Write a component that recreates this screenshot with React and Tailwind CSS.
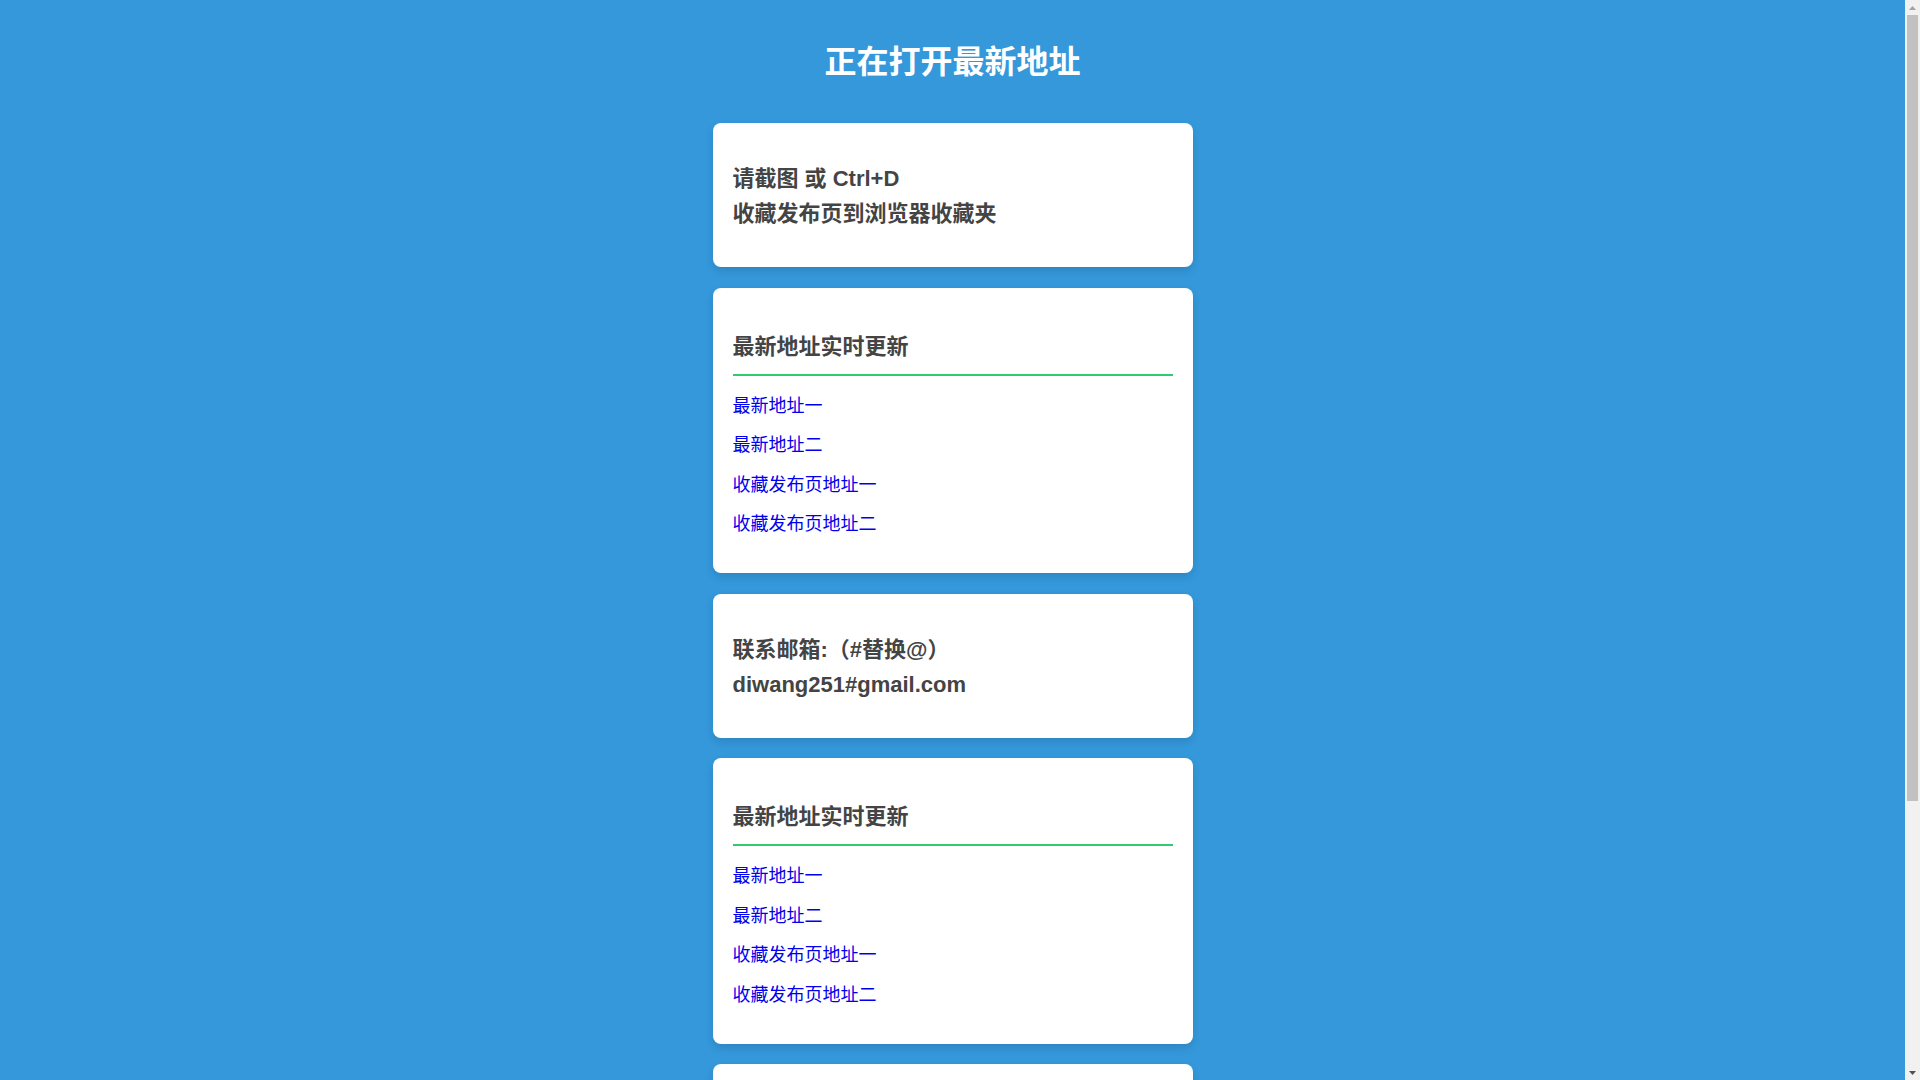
import React from "react";

const font = { fontFamily: '"Liberation Sans", Arial, "Noto Sans CJK SC", sans-serif' };

function CardA() {
  return (
    <div className="bg-white rounded-lg shadow-[0_4px_8px_rgba(0,0,0,0.12)] px-5 pt-[38px] pb-[36px]">
      <p className="text-[22px] leading-[35px] font-bold text-[#444]">请截图 或 Ctrl+D</p>
      <p className="text-[22px] leading-[35px] font-bold text-[#444]">收藏发布页到浏览器收藏夹</p>
    </div>
  );
}

function CardB() {
  const links = ["最新地址一", "最新地址二", "收藏发布页地址一", "收藏发布页地址二"];
  return (
    <div className="bg-white rounded-lg shadow-[0_4px_8px_rgba(0,0,0,0.12)] px-5 pt-[41px] pb-[29px]">
      <h2 className="text-[22px] leading-[35px] font-bold text-[#444] pb-[10px] border-b-2 border-[#2ecc71]">
        最新地址实时更新
      </h2>
      <ul className="mt-[11px]">
        {links.map((l) => (
          <li key={l} className="py-[5.3px] text-[18px] leading-[28.8px]">
            <a href="#" className="text-[#0000ee] no-underline">{l}</a>
          </li>
        ))}
      </ul>
    </div>
  );
}

function CardC() {
  return (
    <div className="bg-white rounded-lg shadow-[0_4px_8px_rgba(0,0,0,0.12)] px-5 pt-[38px] pb-[36px]">
      <p className="text-[22px] leading-[35px] font-bold text-[#444]">联系邮箱:（#替换@）</p>
      <p className="text-[22px] leading-[35px] font-bold text-[#444]">diwang251#gmail.com</p>
    </div>
  );
}

function FakeScrollbar() {
  return (
    <div className="w-[15px] h-screen sticky top-0 bg-[#f1f1f1] flex flex-col shrink-0">
      <div className="h-[15px] flex items-center justify-center">
        <svg width="7" height="4" viewBox="0 0 7 4"><polygon points="3.5,0 7,4 0,4" fill="#a3a3a3" /></svg>
      </div>
      <div className="h-[786px] w-[11px] ml-[2px] bg-[#c1c1c1]" />
      <div className="flex-1" />
      <div className="h-[15px] flex items-center justify-center">
        <svg width="7" height="4" viewBox="0 0 7 4"><polygon points="0,0 7,0 3.5,4" fill="#505050" /></svg>
      </div>
    </div>
  );
}

export default function App() {
  const seq = [0, 1, 2, 1, 1];
  return (
    <div className="flex bg-[#3498db]" style={font}>
      <div className="flex-1 min-w-0 pt-[43px] pb-[92px]">
        <h1 className="text-center text-white font-bold text-[32px] leading-[38px] mb-[42px]">正在打开最新地址</h1>
        <div className="w-[480px] mx-auto flex flex-col gap-[20.5px]">
          {seq.map((t, i) =>
            t === 0 ? <CardA key={i} /> : t === 1 ? <CardB key={i} /> : <CardC key={i} />
          )}
        </div>
      </div>
      <FakeScrollbar />
    </div>
  );
}
